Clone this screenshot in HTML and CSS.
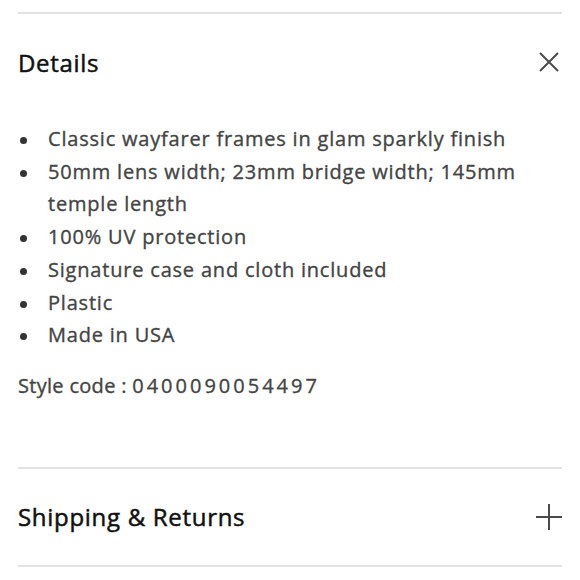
FILE: index.html
```html
<!DOCTYPE html>
<html lang="en">
<head>
    <meta charset="UTF-8">
    <meta name="viewport" content="width=device-width, initial-scale=1.0">
    <title>Product Details</title>
    <link rel="stylesheet" href="styles.css">
</head>
<body>
    <div class="accordion">
        <div class="panel open">
            <div class="panel-head">
                <h2>Details</h2>
                <svg class="icon" width="20" height="20" viewBox="0 0 20 20">
                    <path d="M1 1 L19 19 M19 1 L1 19" stroke="#4a4a4a" stroke-width="2" fill="none"/>
                </svg>
            </div>
            <div class="panel-body">
                <ul class="bullets">
                    <li>Classic wayfarer frames in glam sparkly finish</li>
                    <li>50mm lens width; 23mm bridge width; 145mm temple length</li>
                    <li>100% UV protection</li>
                    <li>Signature case and cloth included</li>
                    <li>Plastic</li>
                    <li>Made in USA</li>
                </ul>
                <p class="style-code">Style code : <span class="code">0400090054497</span></p>
            </div>
        </div>

        <div class="panel">
            <div class="panel-head">
                <h2>Shipping &amp; Returns</h2>
                <svg class="icon plus" width="26" height="26" viewBox="0 0 26 26">
                    <path d="M13 0 V26 M0 13 H26" stroke="#4a4a4a" stroke-width="2" fill="none"/>
                </svg>
            </div>
        </div>
    </div>
</body>
</html>
```

FILE: styles.css
```css
body { margin: 0; padding: 12px 18px 0; background: #fff; font-family: "Open Sans", Arial, sans-serif; }

.accordion { border-top: 2px solid #e2e2e2; }
.panel { border-bottom: 2px solid #e2e2e2; }

.panel-head { display: flex; align-items: center; justify-content: space-between; height: 96px; }
.panel-head h2 { margin: 0; font-size: 24px; font-weight: 400; color: #111; letter-spacing: 0.7px; -webkit-text-stroke: 0.5px #111; }
.panel-head .icon { margin-right: 3px; }
.panel-head .plus { margin-right: 0; }

.panel-body { padding: 13px 0 65px; }

.bullets { margin: 0; padding: 0; list-style: none; }
.bullets li { position: relative; padding-left: 30px; font-size: 20px; line-height: 32.7px; color: #444; letter-spacing: 0.8px; -webkit-text-stroke: 0.35px #444; }
.bullets li::before { content: ""; position: absolute; left: 2px; top: 14px; width: 7px; height: 7px; border-radius: 50%; background: #333; }

.style-code { margin: 17px 0 0; font-size: 20px; line-height: 33px; color: #444; letter-spacing: 0.3px; -webkit-text-stroke: 0.35px #444; }
.style-code .code { letter-spacing: 3px; }
```
